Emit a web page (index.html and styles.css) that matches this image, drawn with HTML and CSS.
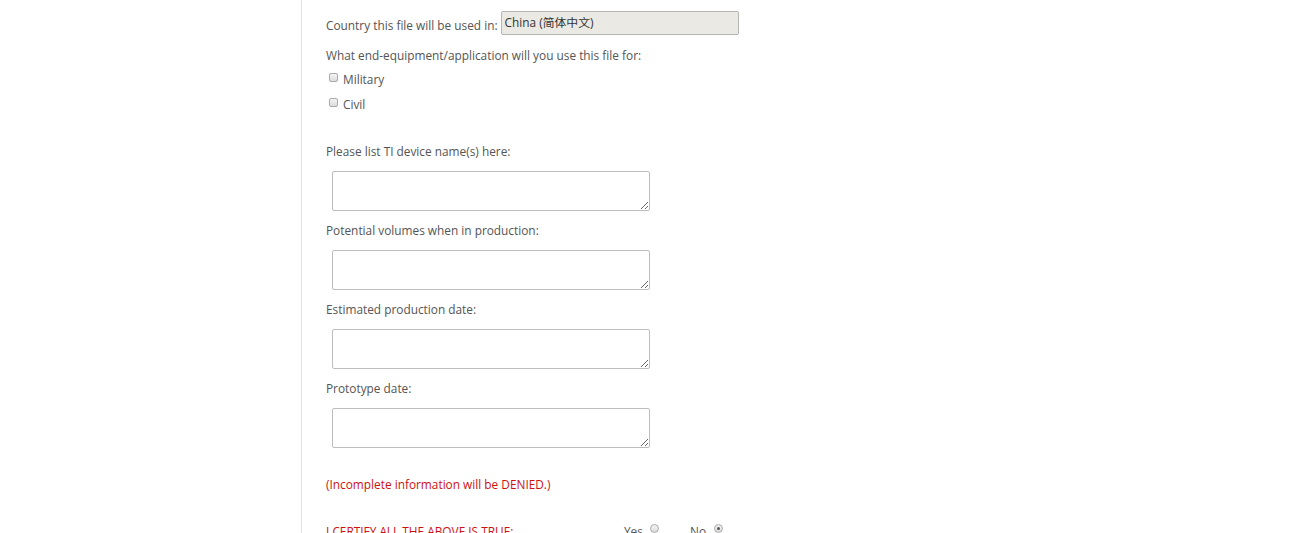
FILE: index.html
```html
<!DOCTYPE html>
<html>
<head>
<meta charset="utf-8">
<link rel="stylesheet" href="styles.css">
</head>
<body>
<div class="page">
  <div class="side"></div>
  <main class="main">
    <div class="row country">
      <span class="label">Country this file will be used in:</span>
      <div class="select">China (简体中文)</div>
    </div>
    <p class="line q">What end-equipment/application will you use this file for:</p>
    <label class="line check"><span class="box"></span>Military</label>
    <label class="line check civil"><span class="box"></span>Civil</label>

    <p class="line field-label first">Please list TI device name(s) here:</p>
    <textarea class="ta"></textarea>
    <p class="line field-label">Potential volumes when in production:</p>
    <textarea class="ta"></textarea>
    <p class="line field-label">Estimated production date:</p>
    <textarea class="ta"></textarea>
    <p class="line field-label">Prototype date:</p>
    <textarea class="ta"></textarea>

    <p class="line warn">(Incomplete information will be DENIED.)</p>
    <div class="line certify">
      <span class="cert-text">I CERTIFY ALL THE ABOVE IS TRUE:</span>
      <span class="opt yes">Yes <span class="radio"></span></span>
      <span class="opt no">No <span class="radio on"></span></span>
    </div>
  </main>
</div>
</body>
</html>
```
FILE: styles.css
```css
html, body {
  margin: 0;
  padding: 0;
  background: #fff;
  overflow: hidden;
}
body {
  font-family: "Open Sans", "Noto Sans CJK SC", sans-serif;
  font-size: 11.85px;
  color: #555;
}
.page {
  display: grid;
  grid-template-columns: 301px 1fr;
  min-height: 600px;
}
.main {
  border-left: 1px solid #e2e2e2;
  padding: 11px 0 0 24px;
}
.line {
  margin: 0;
  line-height: 20px;
  height: 20px;
}
.row.country {
  display: flex;
  align-items: center;
  height: 24px;
}
.row.country .label {
  padding-top: 3px;
}
.select {
  margin-left: 3px;
  width: 233px;
  height: 22px;
  line-height: 20px;
  border: 1px solid #b5b5b5;
  border-radius: 2px;
  background: #ebe9e3;
  color: #333;
  padding-left: 3px;
  font-family: "Open Sans", "Noto Sans CJK SC", sans-serif;
  font-size: 11.85px;
}
.q { margin-top: 10px; }
.check {
  display: flex;
  align-items: center;
  margin-top: 4px;
}
.civil { margin-top: 5px; }
.box {
  width: 7px;
  height: 7px;
  border: 1px solid #a9a9a9;
  border-radius: 2px;
  background: linear-gradient(#f4f4f4, #dcdcdc);
  margin: 0 5px 0 3px;
  position: relative;
  top: -2px;
}
.field-label { margin-top: 9px; }
.field-label.first { margin-top: 27px; }
.ta {
  display: block;
  box-sizing: border-box;
  width: 318px;
  height: 40px;
  margin: 10px 0 0 6px;
  border: 1px solid #bdbdbd;
  border-radius: 2px;
  padding: 2px;
  font-family: "Open Sans", sans-serif;
  font-size: 12px;
  resize: both;
  background: #fff;
}
.warn {
  margin-top: 26px;
  color: #cc1111;
}
.certify {
  margin-top: 27px;
  display: flex;
  align-items: center;
  color: #cc1111;
}
.cert-text { width: 298px; }
.opt {
  color: #555;
  display: inline-flex;
  align-items: center;
}
.opt.yes { width: 66px; }
.radio {
  width: 7px;
  height: 7px;
  border: 1px solid #a9a9a9;
  border-radius: 50%;
  background: linear-gradient(#f4f4f4, #dcdcdc);
  margin-left: 7px;
  position: relative;
  top: -3px;
}
.no .radio { margin-left: 8px; }
.radio.on::after {
  content: "";
  position: absolute;
  left: 2px;
  top: 2px;
  width: 3px;
  height: 3px;
  border-radius: 50%;
  background: #555;
}
```
